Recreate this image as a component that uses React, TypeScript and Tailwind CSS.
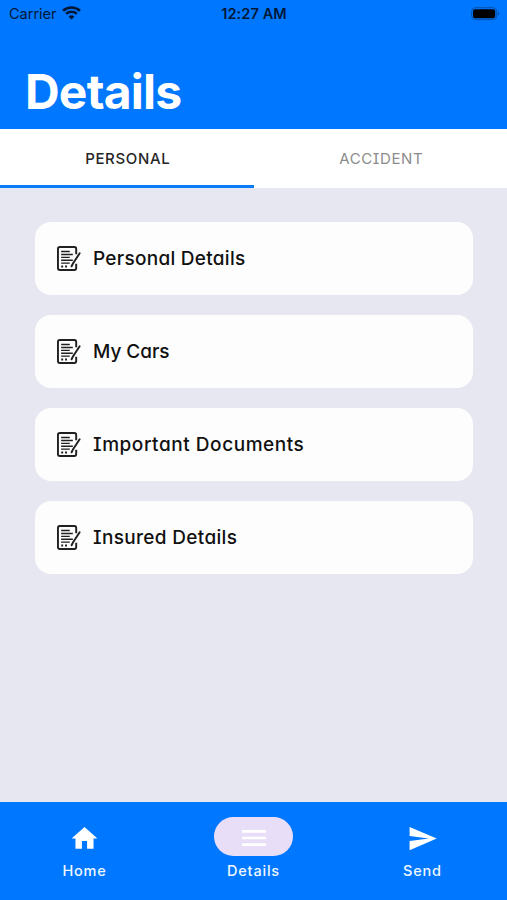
import React from "react";

function WifiIcon() {
  return (
    <svg width="19" height="14" viewBox="0 0 18 14" preserveAspectRatio="none" fill="none" stroke="#001838">
      <path d="M1 4.7C5.4.5 12.6.5 17 4.7" strokeWidth="2.6" />
      <path d="M3.9 7.9c2.9-2.8 7.3-2.8 10.2 0" strokeWidth="2.4" />
      <path d="M9 13.6 6.2 10.7a4 4 0 0 1 5.6 0Z" fill="#001838" stroke="none" />
    </svg>
  );
}

function BatteryIcon() {
  return (
    <svg width="29" height="14" viewBox="0 0 29 14">
      <rect x="0.7" y="0.7" width="25" height="12" rx="3.6" fill="none" stroke="#003c80" strokeOpacity="0.65" />
      <rect x="2" y="2.2" width="22.2" height="9" rx="2" fill="#000" />
      <path d="M27 4.7c1.7.8 1.7 3.2 0 4Z" fill="#003c80" fillOpacity="0.7" />
    </svg>
  );
}

function FormIcon() {
  return (
    <svg width="24" height="25" viewBox="0 0 25 26" preserveAspectRatio="none" fill="none" stroke="#202020">
      <path d="M20 8.5V3a2 2 0 0 0-2-2H3a2 2 0 0 0-2 2v20a2 2 0 0 0 2 2h15a2 2 0 0 0 2-2v-4.5" strokeWidth="2" />
      <path d="M4.3 5.8h9M4.3 8.8h12.2M4.3 11.8h9M4.3 14.8h12.2M4.3 17.8h9" strokeWidth="1.5" />
      <path d="M4.4 21.4h2M8.4 21.4h2" strokeWidth="2.1" />
      <path d="M23.6 7.6 16.6 18.3l-1.4 2.8" strokeWidth="2" strokeLinecap="round" />
    </svg>
  );
}

const rows = [
  { label: "Personal Details", spacing: "tracking-[0.28px]" },
  { label: "My Cars", spacing: "-tracking-[0.05px]" },
  { label: "Important Documents", spacing: "tracking-[0.55px]" },
  { label: "Insured Details", spacing: "tracking-[0.33px]" },
];

const lexical = "[font-feature-settings:'cv08','cv11']";

export default function App() {
  return (
    <div className="flex h-[900px] w-[507px] flex-col overflow-hidden bg-[#e7e7f1] font-['Inter','Liberation_Sans',sans-serif]">
      <header className="flex h-[129px] shrink-0 flex-col bg-[#0077ff]">
        <div className="grid h-7 grid-cols-3 items-center pl-[9px] pr-[7px] text-[14.5px] leading-7 text-[#001838]">
          <div className="flex items-center gap-[5px]">
            <span>Carrier</span>
            <span className="-mt-0.5">
              <WifiIcon />
            </span>
          </div>
          <span className="whitespace-nowrap pr-px text-center font-semibold tracking-[0.1px]">12:27 AM</span>
          <div className="flex justify-end">
            <BatteryIcon />
          </div>
        </div>
        <h1 className="mt-[34px] pl-[25px] text-[48px] font-bold leading-[60px] tracking-[-0.8px] text-white">Details</h1>
      </header>

      <nav className={`grid h-[59px] shrink-0 grid-cols-2 bg-white text-center text-[15px] leading-[59px] ${lexical}`}>
        <div className="h-[59px] border-b-[3px] border-[#0a7cf5] pl-0.5 font-medium tracking-[0.65px] text-[#262626]">PERSONAL</div>
        <div className="h-[59px] pl-0.5 tracking-[0.6px] text-[#8c8c8c]">ACCIDENT</div>
      </nav>

      <main className="flex flex-1 flex-col gap-5 px-[35px] pt-[34px]">
        {rows.map((row) => (
          <div key={row.label} className="flex h-[73px] w-[438px] items-center gap-[12px] rounded-[16px] bg-[#fdfdfd] pl-[22px]">
            <FormIcon />
            <span className={`whitespace-nowrap pt-px text-[19px] font-medium leading-6 text-[#111] ${lexical} ${row.spacing}`}>{row.label}</span>
          </div>
        ))}
      </main>

      <footer className="grid h-[98px] shrink-0 grid-cols-3 bg-[#0077ff] pt-[15px] text-center text-[14.5px] font-medium leading-5 tracking-[0.8px] text-[#eef7ff]">
        <div className="flex flex-col items-center">
          <div className="flex h-[39px] items-center pt-[3px]">
            <svg width="31" height="31" viewBox="0 0 24 24" fill="#fff">
              <path d="M10 20v-6h4v6h5v-8h3L12 3 2 12h3v8z" />
            </svg>
          </div>
          <span className="mt-[5px]">Home</span>
        </div>
        <div className="flex flex-col items-center">
          <div className="flex h-[39px] w-[79px] items-center justify-center rounded-full bg-[#e8def8] pt-[3px]">
            <svg width="32" height="32" viewBox="0 0 24 24" fill="#fff">
              <path d="M3 18h18v-2H3v2Zm0-5h18v-2H3v2Zm0-7v2h18V6H3Z" />
            </svg>
          </div>
          <span className="mt-[5px]">Details</span>
        </div>
        <div className="flex flex-col items-center">
          <div className="flex h-[39px] items-center pt-[3px]">
            <svg width="31" height="31" viewBox="0 0 24 24" fill="#fff">
              <path d="M2.01 21 23 12 2.01 3 2 10l15 2-15 2z" />
            </svg>
          </div>
          <span className="mt-[5px]">Send</span>
        </div>
      </footer>
    </div>
  );
}
